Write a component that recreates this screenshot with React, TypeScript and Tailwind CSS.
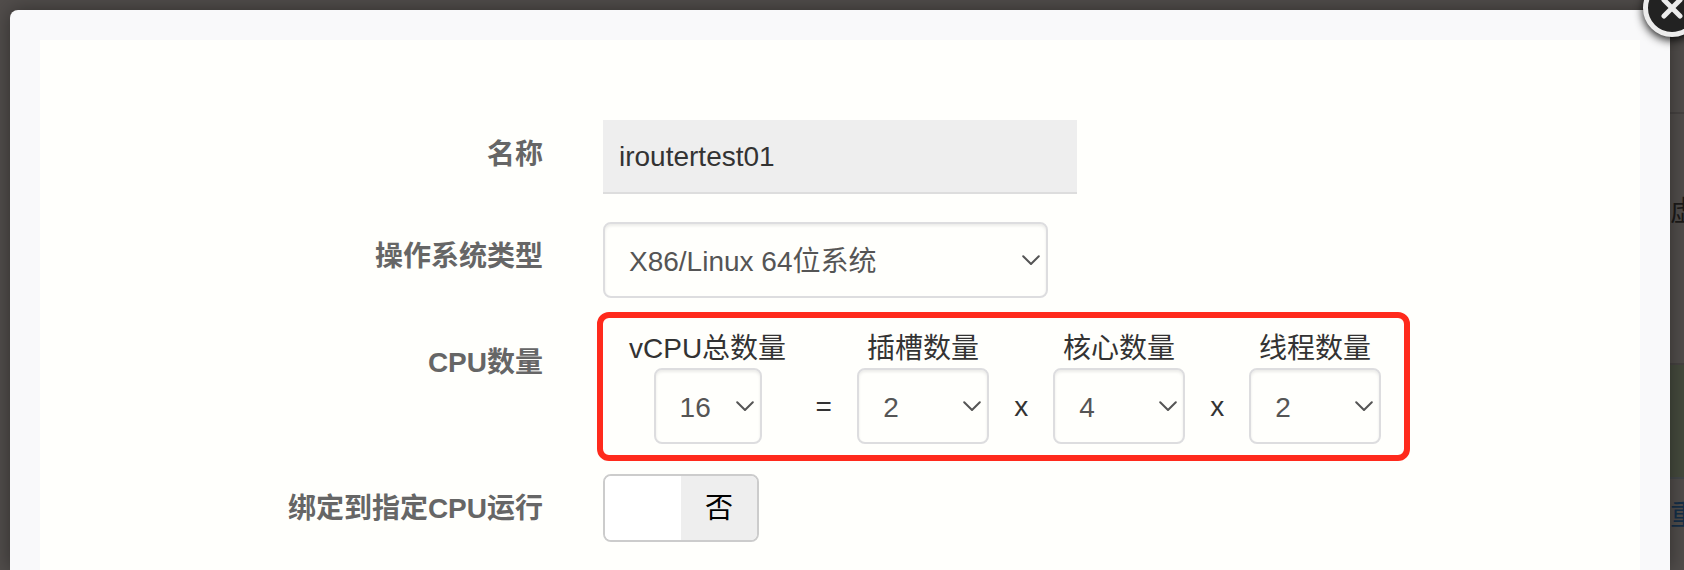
import React, { useState } from 'react';

interface SelectBoxProps {
  id: string;
  value: string;
  options: string[];
  onChange: (value: string) => void;
  className?: string;
}

const SelectBox: React.FC<SelectBoxProps> = ({ id, value, options, onChange, className = '' }) => (
  <div className={`relative ${className}`}>
    <select
      id={id}
      value={value}
      onChange={(e) => onChange(e.target.value)}
      className="block h-[76px] w-full appearance-none rounded-lg border-2 border-[#dddddf] bg-[#fffffc] pl-6 pr-8 pt-[3px] text-[#555] shadow-[inset_0_2px_3px_rgba(0,0,0,0.08)]"
    >
      {options.map((option) => (
        <option key={option}>{option}</option>
      ))}
    </select>
    <svg
      viewBox="0 0 18 10"
      className="pointer-events-none absolute right-2 top-1/2 h-[10px] w-[18px] -translate-y-1/2"
      fill="none"
      stroke="#555"
      strokeWidth="2"
      strokeLinecap="round"
      strokeLinejoin="round"
      aria-hidden="true"
    >
      <path d="M1.2 1.2L9 9L16.8 1.2" />
    </svg>
  </div>
);

interface FormRowProps {
  label: string;
  htmlFor: string;
  children: React.ReactNode;
}

const FormRow: React.FC<FormRowProps> = ({ label, htmlFor, children }) => (
  <div className="grid grid-cols-[503fr_1037fr] gap-[60px]">
    <label htmlFor={htmlFor} className="pt-3.5 text-right font-bold leading-[42px] text-[#666]">
      {label}
    </label>
    <div>{children}</div>
  </div>
);

interface CpuFieldProps extends SelectBoxProps {
  label: string;
}

const CpuField: React.FC<CpuFieldProps> = ({ label, ...select }) => (
  <div className="flex flex-col items-center">
    <label htmlFor={select.id} className="whitespace-nowrap leading-[38px]">
      {label}
    </label>
    <SelectBox {...select} />
  </div>
);

const Operator: React.FC<{ sign: string; className: string }> = ({ sign, className }) => (
  <span className={`text-center leading-[74px] ${className}`}>{sign}</span>
);

const COUNTS = ['1', '2', '4', '8'];

export default function App() {
  const [name, setName] = useState('iroutertest01');
  const [osType, setOsType] = useState('X86/Linux 64位系统');
  const [total, setTotal] = useState('16');
  const [sockets, setSockets] = useState('2');
  const [cores, setCores] = useState('4');
  const [threads, setThreads] = useState('2');
  const [pinned, setPinned] = useState(false);

  return (
    <div className="flex min-h-screen overflow-hidden bg-[#514d4b] pl-2.5 font-['Liberation_Sans','Noto_Sans_CJK_SC',sans-serif] text-[28px] text-[#333]">
      <div
        role="dialog"
        aria-label="虚拟机配置"
        className="relative z-10 mt-2.5 flex min-w-0 flex-1 flex-col rounded-t-lg bg-[#f9f9fa] px-[30px] pt-[30px] shadow-[0_0_20px_rgba(0,0,0,0.4)]"
      >
        <form className="flex-1 bg-[#fffffc] pb-7 pt-20">
          <div className="flex flex-col gap-[30px]">
            <FormRow label="名称" htmlFor="name">
              <input
                id="name"
                type="text"
                value={name}
                onChange={(e) => setName(e.target.value)}
                className="-mb-0.5 block h-[74px] w-[474px] border-b-2 border-[#ddd] bg-[#eee] px-4 pt-0.5"
              />
            </FormRow>

            <FormRow label="操作系统类型" htmlFor="os-type">
              <SelectBox
                id="os-type"
                value={osType}
                options={['X86/Linux 64位系统', 'X86/Windows 64位系统']}
                onChange={setOsType}
                className="w-[445px]"
              />
            </FormRow>

            <FormRow label="CPU数量" htmlFor="vcpu-total">
              <div className="-mb-[17px] -ml-1.5 -mt-4 flex w-fit items-end rounded-xl border-6 border-[#ff2a1c] pb-[11px] pl-[26px] pr-[23px] pt-3">
                <CpuField
                  id="vcpu-total"
                  label="vCPU总数量"
                  value={total}
                  options={['1', '2', '4', '8', '16', '32']}
                  onChange={setTotal}
                  className="w-[108px]"
                />
                <Operator sign="=" className="w-[71px] pl-1" />
                <CpuField id="sockets" label="插槽数量" value={sockets} options={COUNTS} onChange={setSockets} className="w-[132px]" />
                <Operator sign="x" className="w-16" />
                <CpuField id="cores" label="核心数量" value={cores} options={COUNTS} onChange={setCores} className="w-[132px]" />
                <Operator sign="x" className="w-16" />
                <CpuField id="threads" label="线程数量" value={threads} options={COUNTS} onChange={setThreads} className="w-[132px]" />
              </div>
            </FormRow>

            <FormRow label="绑定到指定CPU运行" htmlFor="pin-cpu">
              <label className="relative flex h-[68px] w-[156px] cursor-pointer overflow-hidden rounded-lg border-2 border-[#ccc] bg-white text-black">
                <input
                  id="pin-cpu"
                  type="checkbox"
                  checked={pinned}
                  onChange={(e) => setPinned(e.target.checked)}
                  className="sr-only"
                />
                {pinned && <span className="flex-1 bg-[#eee] text-center leading-[66px]">是</span>}
                <span className="flex-1 bg-white" />
                {!pinned && <span className="flex-1 bg-[#eee] text-center leading-[66px]">否</span>}
              </label>
            </FormRow>
          </div>
        </form>

        <button
          type="button"
          aria-label="关闭"
          className="absolute -right-[31px] -top-[31px] flex size-[58px] items-center justify-center rounded-full border-5 border-[#ececec] bg-[#222] shadow-[0_3px_10px_rgba(0,0,0,0.9)]"
        >
          <svg viewBox="0 0 22 22" className="size-[22px]" stroke="#ececec" strokeWidth="5" strokeLinecap="round" aria-hidden="true">
            <path d="M3 3L19 19M19 3L3 19" />
          </svg>
        </button>
      </div>

      {/* dimmed page showing past the dialog edge */}
      <div className="w-3.5 shrink-0 overflow-hidden whitespace-nowrap text-[#1c1a19]">
        <div className="h-[114px] border-b-2 border-[#464241]" />
        <div className="h-[251px] border-b-2 border-[#464241] pt-[77px] leading-[42px]">虚</div>
        <div className="h-[114px] border-b-2 border-[#44484a] bg-[#454a3d]" />
        <div className="pt-4 leading-[42px]">
          <a href="#restart" className="text-[#152f48]">重</a>
        </div>
      </div>
    </div>
  );
}
